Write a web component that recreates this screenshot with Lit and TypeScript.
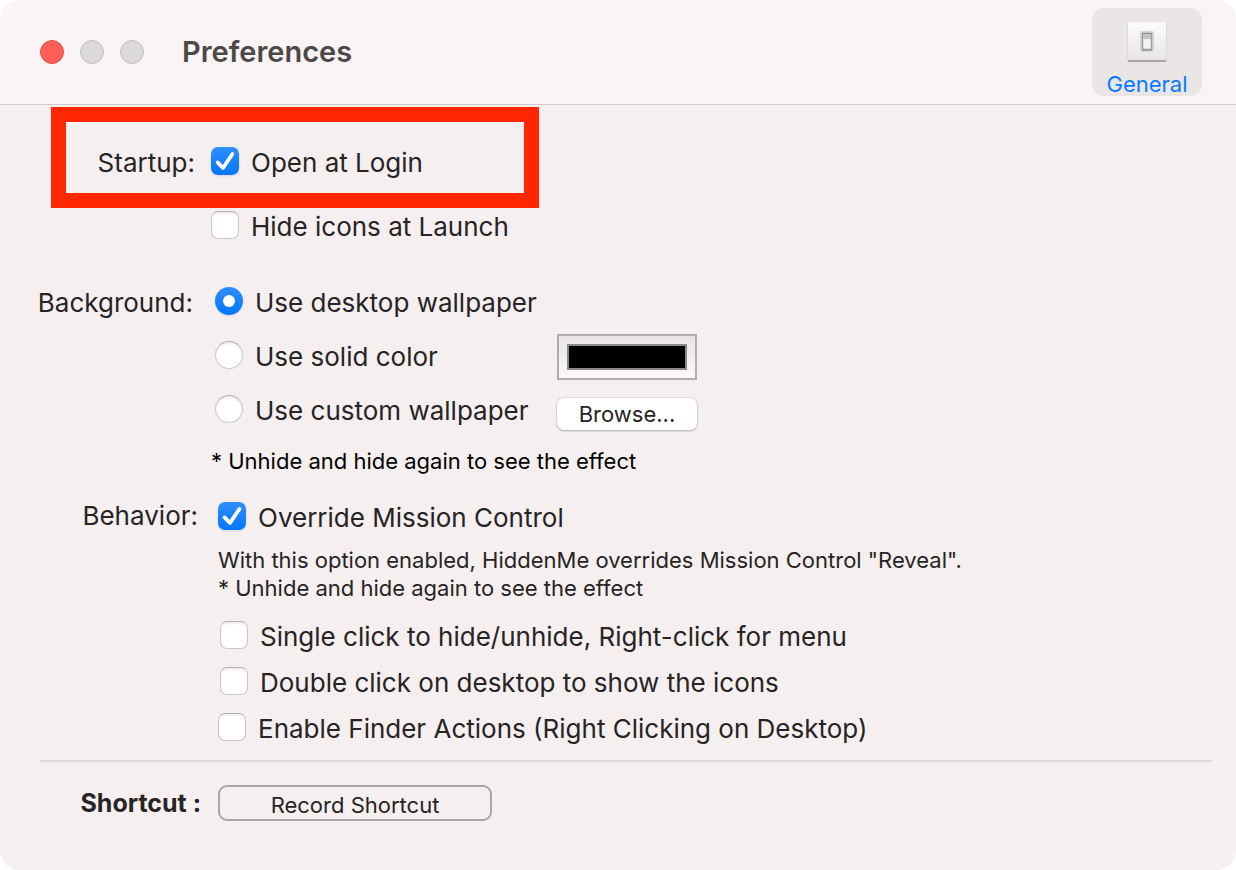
import { LitElement, html, css, svg } from "lit";
import { customElement, property, state } from "lit/decorators.js";

const controls = css`
  * {
    box-sizing: border-box;
  }
  .choice {
    display: flex;
    align-items: flex-start;
    gap: 12px;
    line-height: 32px;
    white-space: nowrap;
  }
  .mark {
    position: relative;
    flex: none;
    width: 28px;
    height: 28px;
  }
  .mark input {
    appearance: none;
    display: block;
    width: 28px;
    height: 28px;
    margin: 0;
    border: 1px solid #cbc6c6;
    border-top-color: #b4b0b0;
    border-radius: 7px;
    background: #fff;
    box-shadow: inset 0 2px 2px #f1eeee;
  }
  .mark input[type="radio"] {
    border-radius: 50%;
  }
  .mark input:checked {
    border: 0;
    background: linear-gradient(#2f8fff, #0575ff);
    box-shadow: 0 1px 2px #d5d3dc;
  }
  .glyph {
    position: absolute;
    inset: 0;
    pointer-events: none;
  }
`;

@customElement("pref-choice")
class PrefChoice extends LitElement {
  @property() kind: "checkbox" | "radio" = "checkbox";
  @property() text = "";
  @property({ type: Boolean }) checked = false;

  static styles = [
    controls,
    css`
      :host {
        display: block;
      }
    `,
  ];

  private onChange(e: Event) {
    this.checked = (e.target as HTMLInputElement).checked;
    this.dispatchEvent(new CustomEvent("picked", { detail: this.checked }));
  }

  render() {
    const glyph =
      this.kind === "radio"
        ? svg`<circle cx="14" cy="14" r="6" fill="#fff" />`
        : svg`<path d="M6.6 15.4 12 21 21.4 7" fill="none" stroke="#fff" stroke-width="3.8" stroke-linecap="round" stroke-linejoin="round" />`;
    return html`
      <label class="choice">
        <span class="mark">
          <input type=${this.kind} .checked=${this.checked} @change=${this.onChange} />
          ${this.checked
            ? html`<svg class="glyph" width="28" height="28" viewBox="0 0 28 28" aria-hidden="true">${glyph}</svg>`
            : null}
        </span>
        <span>${this.text}</span>
      </label>
    `;
  }
}

@customElement("app-root")
class AppRoot extends LitElement {
  @state() private background = "desktop";

  static styles = css`
    * {
      box-sizing: border-box;
    }
    :host {
      display: block;
      background: #fff;
      color: #262424;
      font-family: Inter, "Liberation Sans", sans-serif;
      font-size: 26px;
      line-height: 32px;
    }
    .window {
      min-height: 100vh;
      overflow: hidden;
      border-radius: 20px;
      background: #f5efef;
    }
    .titlebar {
      display: flex;
      align-items: center;
      height: 105px;
      padding: 0 34px 0 40px;
      border-bottom: 1px solid #d0cbca;
      background: #faf4f4;
    }
    .lights {
      display: flex;
      gap: 16px;
    }
    .light {
      width: 24px;
      height: 24px;
      padding: 0;
      border: 1px solid #c3bfbf;
      border-radius: 50%;
      background: #dddada;
    }
    .light.close {
      border-color: #e2514a;
      background: #ff5f57;
    }
    h1 {
      margin: 0 auto 0 38px;
      color: #4b4848;
      font-size: 29px;
      font-weight: 600;
    }
    .tab {
      display: flex;
      flex-direction: column;
      align-items: center;
      width: 110px;
      height: 88px;
      padding: 12px 0 0;
      border: 0;
      border-radius: 12px;
      background: #ebe6e6;
      color: #087aff;
      font: inherit;
      font-size: 22px;
      line-height: 28px;
    }
    .tab svg {
      display: block;
      flex: none;
      margin-bottom: 8px;
    }
    main {
      padding: 42px 24px 48px 40px;
    }
    .row {
      display: flex;
      align-items: flex-start;
    }
    .caption {
      display: flex;
      flex: none;
      justify-content: flex-end;
      white-space: nowrap;
    }
    .startup {
      position: relative;
      gap: 16px;
    }
    .startup .caption {
      width: 155px;
    }
    .highlight {
      position: absolute;
      top: -40px;
      left: 11px;
      width: 488px;
      height: 101px;
      border: 15px solid #ff2600;
      pointer-events: none;
    }
    .stack {
      display: grid;
      gap: 32px;
    }
    .background {
      gap: 22px;
      margin-top: 33px;
    }
    .background .caption {
      width: 153px;
      line-height: 54px;
    }
    .options {
      display: grid;
      grid-template-columns: 342px auto;
      grid-auto-rows: 54px;
      align-items: center;
    }
    .options .first {
      grid-column: 1 / -1;
    }
    .well {
      width: 140px;
      height: 46px;
      padding: 8px;
      border: 2px solid #b0acac;
      border-radius: 0;
      background: linear-gradient(#e9e4e4, #fdf8f8);
      appearance: none;
    }
    .well::-webkit-color-swatch-wrapper {
      padding: 0;
    }
    .well::-webkit-color-swatch {
      border: 2px solid #8c8989;
      border-radius: 0;
    }
    .browse {
      width: 140px;
      height: 32px;
      margin-top: 6px;
      padding: 0;
      border: 0;
      border-radius: 7px;
      background: #fff;
      box-shadow: 0 0 2px #b5b0b0, 0 1px 2px #b9b4b4;
      color: #262424;
      font: inherit;
      font-size: 22px;
    }
    .note {
      margin: 0;
      font-size: 22px;
      line-height: 28px;
    }
    .note.effect {
      margin: 9px 0 0 171px;
      color: #000;
    }
    .behavior {
      gap: 20px;
      margin-top: 27px;
    }
    .behavior .caption {
      width: 158px;
      line-height: 28px;
    }
    .behavior .note {
      margin: 12px 0 19px;
    }
    .clicks {
      display: grid;
      gap: 14px;
    }
    .inset {
      margin-left: 2px;
    }
    hr {
      height: 2px;
      margin: 15px 0 23px;
      border: 0;
      background: #dedad9;
    }
    .shortcut {
      align-items: center;
      gap: 17px;
    }
    .shortcut .caption {
      width: 161px;
      font-weight: 700;
      font-size: 25px;
    }
    .record {
      width: 274px;
      height: 36px;
      padding: 4px 0 0;
      border: 2px solid #aaa6a6;
      border-radius: 9px;
      background: transparent;
      color: #262424;
      font: inherit;
      font-size: 22px;
      line-height: 28px;
    }
  `;

  private wallpaper(value: string, text: string, first = false) {
    return html`<pref-choice
      class=${first ? "first" : ""}
      kind="radio"
      text=${text}
      .checked=${this.background === value}
      @picked=${() => (this.background = value)}
    ></pref-choice>`;
  }

  render() {
    return html`
      <div class="window">
        <header class="titlebar">
          <div class="lights">
            <button class="light close" aria-label="Close"></button>
            <button class="light" aria-label="Minimize" disabled></button>
            <button class="light" aria-label="Zoom" disabled></button>
          </div>
          <h1>Preferences</h1>
          <button class="tab">
            <svg width="42" height="42" viewBox="0 0 42 42" aria-hidden="true">
              <defs>
                <linearGradient id="plate" x2="0" y2="1">
                  <stop stop-color="#fdfcfc" />
                  <stop offset="1" stop-color="#e8e5e5" />
                </linearGradient>
              </defs>
              <rect x="1" y="2" width="40" height="39" fill="#ddd8d8" />
              <rect x="2" y="2" width="38" height="38" fill="url(#plate)" />
              <path d="M2 41h38" stroke="#a9a5a5" stroke-width="2" />
              <rect x="14" y="11" width="14" height="21" rx="2" fill="#d9d6d6" />
              <rect x="16.5" y="13.500" width="9" height="16" fill="#f3f2f2" stroke="#a19e9e" stroke-width="1.500" />
              <path d="M17 14h8v5h-8z" fill="#c4c1c1" />
              <path d="M16 13.500h10M16 30h10" stroke="#8f8c8c" />
            </svg>
            General
          </button>
        </header>
        <main>
          <section class="row startup">
            <span class="caption">Startup:</span>
            <div class="stack">
              <pref-choice text="Open at Login" checked></pref-choice>
              <pref-choice text="Hide icons at Launch"></pref-choice>
            </div>
            <div class="highlight"></div>
          </section>
          <section class="row background">
            <span class="caption">Background:</span>
            <div class="options">
              ${this.wallpaper("desktop", "Use desktop wallpaper", true)}
              ${this.wallpaper("solid", "Use solid color")}
              <input class="well" type="color" value="#000000" aria-label="Solid color" />
              ${this.wallpaper("custom", "Use custom wallpaper")}
              <button class="browse">Browse...</button>
            </div>
          </section>
          <p class="note effect">* Unhide and hide again to see the effect</p>
          <section class="row behavior">
            <span class="caption">Behavior:</span>
            <div>
              <pref-choice text="Override Mission Control" checked></pref-choice>
              <p class="note">
                With this option enabled, HiddenMe overrides Mission Control "Reveal".<br />
                * Unhide and hide again to see the effect
              </p>
              <div class="clicks">
                <pref-choice class="inset" text="Single click to hide/unhide, Right-click for menu"></pref-choice>
                <pref-choice class="inset" text="Double click on desktop to show the icons"></pref-choice>
                <pref-choice text="Enable Finder Actions (Right Clicking on Desktop)"></pref-choice>
              </div>
            </div>
          </section>
          <hr />
          <section class="row shortcut">
            <span class="caption">Shortcut :</span>
            <button class="record">Record Shortcut</button>
          </section>
        </main>
      </div>
    `;
  }
}
